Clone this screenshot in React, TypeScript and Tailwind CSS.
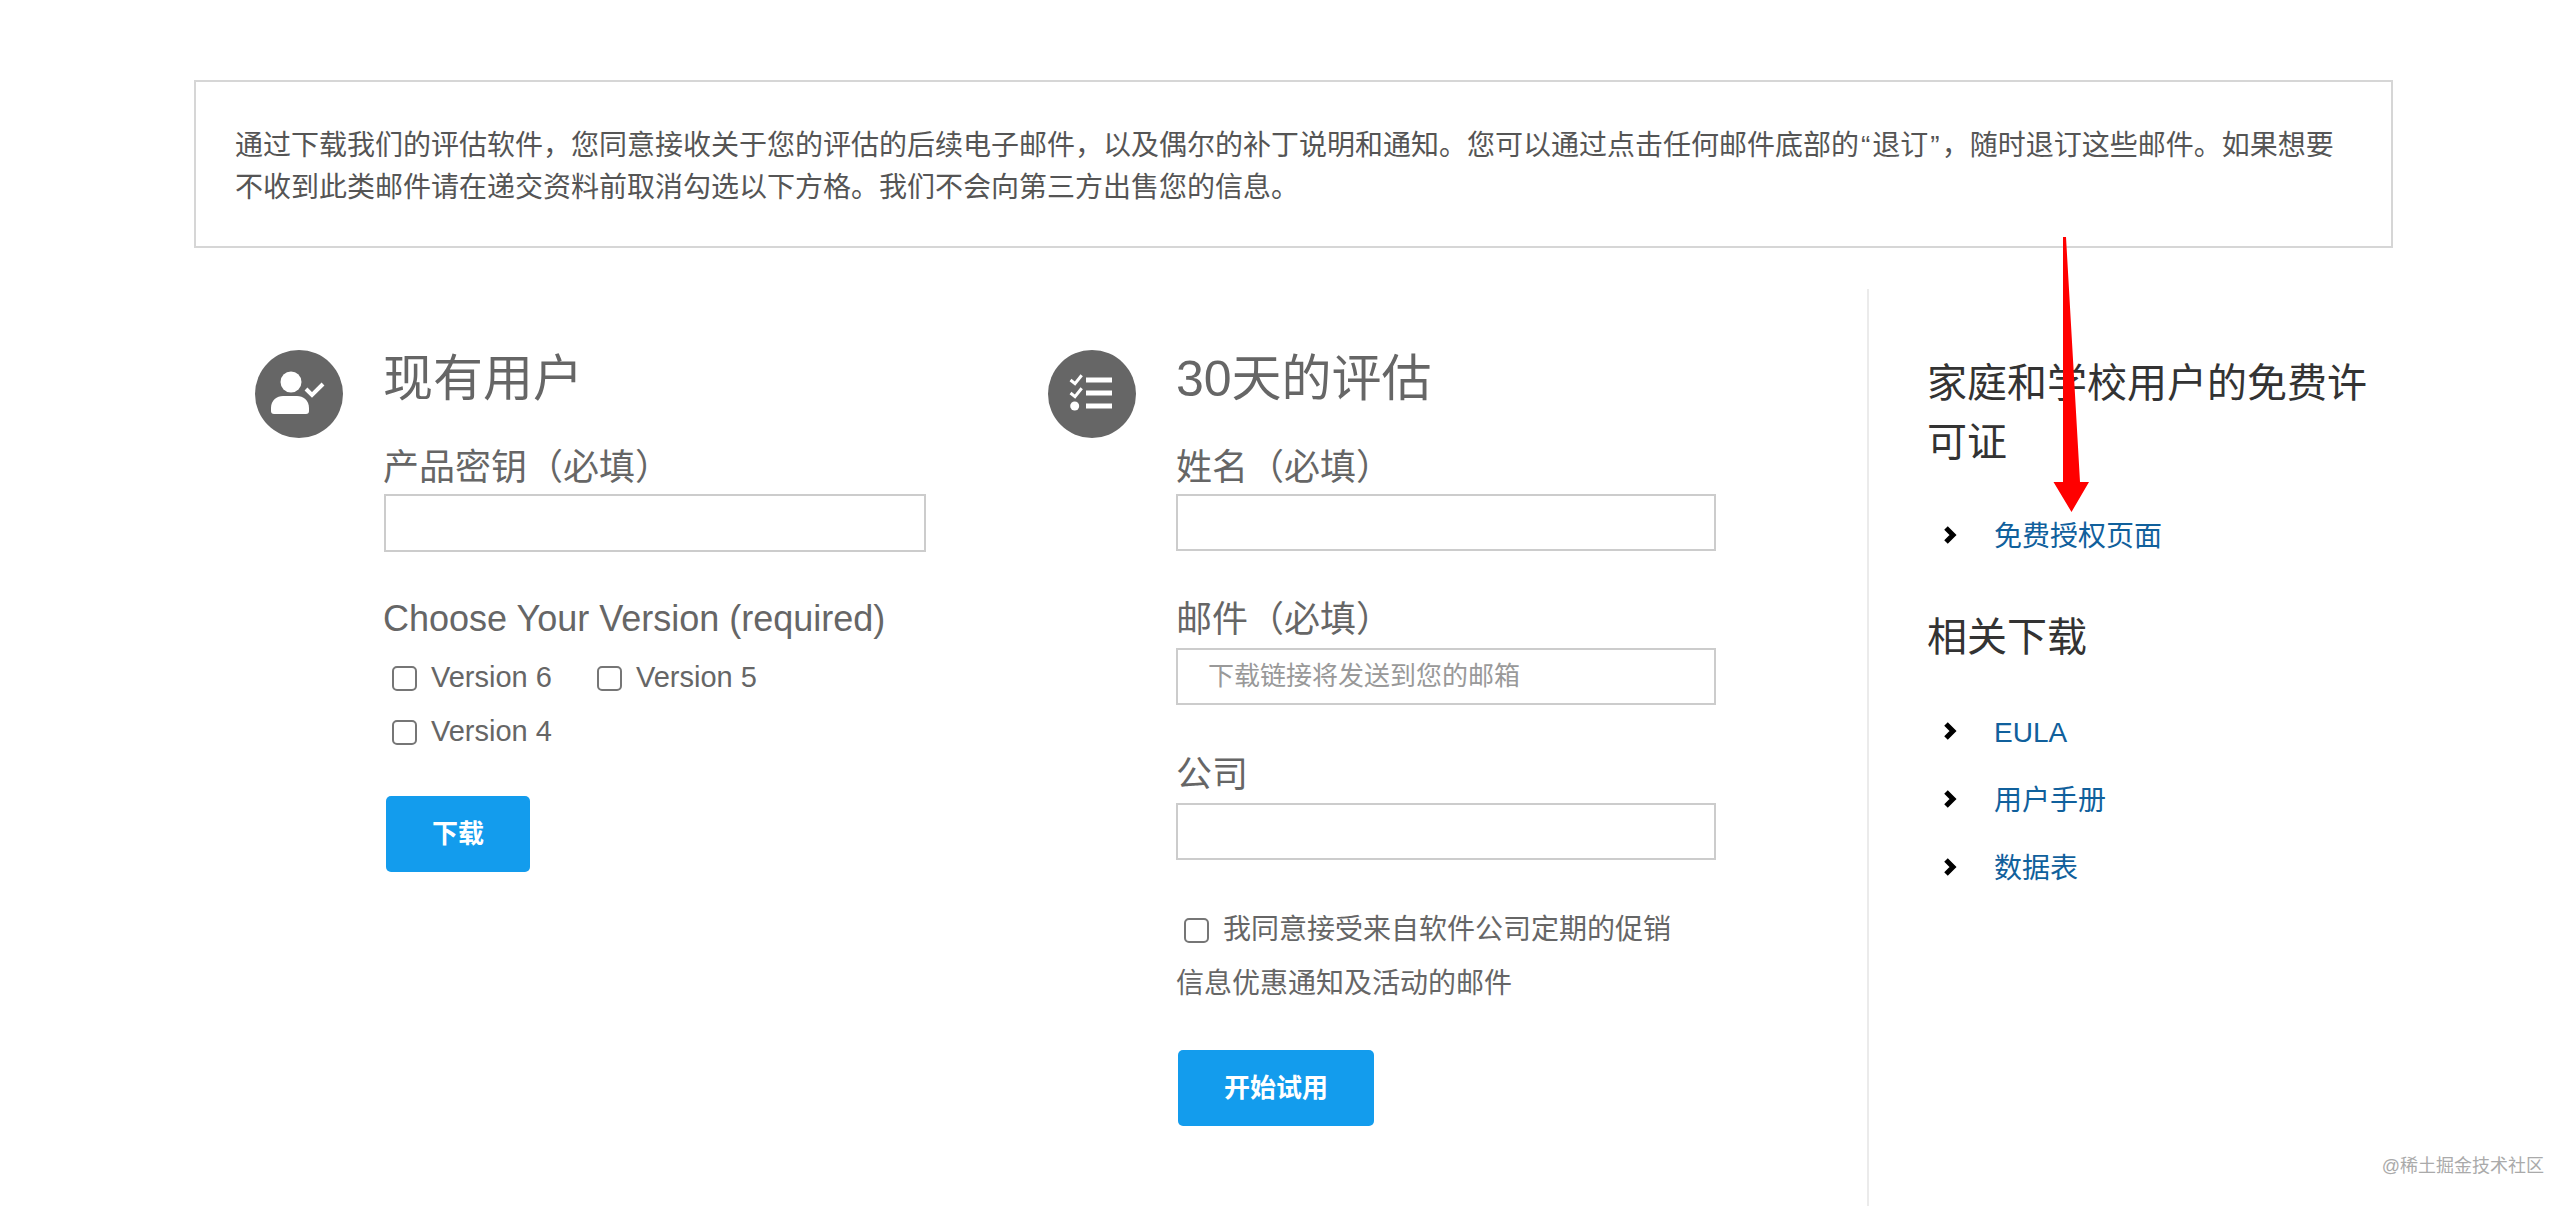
const cjk = "font-['Liberation_Sans','Noto_Sans_CJK_SC',sans-serif]";

const Chevron = () => (
  <svg className="w-[14px] h-[18px] shrink-0 -mt-[4px]" viewBox="0 0 14 18" fill="none" stroke="#000" strokeWidth={5}>
    <path d="M3 2l7 7-7 7" />
  </svg>
);

const Check = () => (
  <input
    type="checkbox"
    className="appearance-none w-[25px] h-[25px] shrink-0 rounded-[5px] border-2 border-[#767676] bg-white"
  />
);

const Field = ({ label, placeholder, top, gap }: { label: string; placeholder?: string; top: string; gap: string }) => (
  <div className={top}>
    <label className={`block text-[36px] leading-[50px] text-[#666] ${gap}`}>{label}</label>
    <input
      placeholder={placeholder}
      className="block w-[540px] h-[57px] border-2 border-[#ccc] bg-white pl-[30px] text-[26px] text-[#666] placeholder:text-[#999] outline-none"
    />
  </div>
);

const LinkRow = ({ text }: { text: string }) => (
  <a href="#" className="flex items-center h-[68px] pl-[16px] text-[28px] text-[#10609c]">
    <Chevron />
    <span className="ml-[37px]">{text}</span>
  </a>
);

const Version = ({ name, wide }: { name: string; wide?: boolean }) => (
  <label className={`flex items-center gap-[14px] text-[29px] text-[#666] ${wide ? "w-[205px]" : ""}`}>
    <Check />
    {name}
  </label>
);

export default function App() {
  return (
    <div className={`relative w-[2574px] h-[1206px] overflow-hidden bg-white pt-[80px] ${cjk}`}>
      <div className="ml-[194px] w-[2199px] h-[168px] border-2 border-[#d6d6d6] flex items-center pl-[39px] pt-[5px]">
        <p className="text-[28px] leading-[42px] text-[#555] whitespace-nowrap">
          通过下载我们的评估软件，您同意接收关于您的评估的后续电子邮件，以及偶尔的补丁说明和通知。您可以通过点击任何邮件底部的<span className="px-[2px]">“</span>退订<span className="px-[2px]">”</span>，随时退订这些邮件。如果想要
          <br />
          不收到此类邮件请在递交资料前取消勾选以下方格。我们不会向第三方出售您的信息。
        </p>
      </div>

      <div className="flex mt-[41px] h-[917px]">
        <div className="ml-[255px] w-[793px] pt-[60px] flex gap-[40px]">
          <div className="w-[88px] h-[88px] mt-[1px] rounded-full bg-[#666] shrink-0">
            <svg viewBox="0 0 88 88" className="w-[88px] h-[88px]" fill="#fff">
              <circle cx="36" cy="32" r="10.5" />
              <path d="M16 58c0-8 6-12 12-12h14c6 0 12 4 12 12v3a3 3 0 01-3 3H19a3 3 0 01-3-3z" />
              <path d="M51 39l6 6 11-11" fill="none" stroke="#fff" strokeWidth={4} />
            </svg>
          </div>
          <div>
            <h2 className="text-[50px] leading-[60px] text-[#666] font-normal mb-[34px]">现有用户</h2>
            <label className="block text-[36px] leading-[50px] text-[#666] mb-[1px]">产品密钥（必填）</label>
            <input className="block ml-[1px] w-[542px] h-[58px] border-2 border-[#ccc] bg-white outline-none" />
            <div className="mt-[42px] text-[36px] leading-[50px] text-[#666]">Choose Your Version (required)</div>
            <div className="mt-[7px] pl-[9px]">
              <div className="flex items-center h-[54px]">
                <Version name="Version 6" wide />
                <Version name="Version 5" />
              </div>
              <div className="flex items-center h-[54px]">
                <Version name="Version 4" />
              </div>
            </div>
            <button className="block mt-[37px] ml-[3px] w-[144px] h-[76px] rounded-[5px] bg-[#139ced] text-white text-[26px] font-bold">
              下载
            </button>
          </div>
        </div>

        <div className="w-[819px] pt-[60px] flex gap-[40px]">
          <div className="w-[88px] h-[88px] mt-[1px] rounded-full bg-[#666] shrink-0">
            <svg viewBox="0 0 88 88" className="w-[88px] h-[88px]" fill="#fff">
              <rect x="38" y="27.5" width="26" height="5" />
              <rect x="38" y="40.5" width="26" height="5" />
              <rect x="38" y="53.5" width="26" height="5" />
              <path d="M22.5 30l4.5 3.7 6.7-8.4M22.5 43l4.5 3.7 6.7-8.4" fill="none" stroke="#fff" strokeWidth={3} />
              <circle cx="26.7" cy="56" r="4.5" />
            </svg>
          </div>
          <div>
            <h2 className="text-[50px] leading-[60px] text-[#666] font-normal mb-[34px]">30天的评估</h2>
            <Field label="姓名（必填）" top="" gap="mb-[1px]" />
            <Field label="邮件（必填）" placeholder="下载链接将发送到您的邮箱" top="mt-[44px]" gap="mb-[3px]" />
            <Field label="公司" top="mt-[45px]" gap="mb-[3px]" />
            <div className="mt-[43px] text-[28px] leading-[54px] text-[#666]">
              <label className="flex items-center gap-[14px] pl-[8px]">
                <Check />
                我同意接受来自软件公司定期的促销
              </label>
              <div>信息优惠通知及活动的邮件</div>
            </div>
            <button className="block mt-[39px] ml-[2px] w-[196px] h-[76px] rounded-[5px] bg-[#139ced] text-white text-[26px] font-bold">
              开始试用
            </button>
          </div>
        </div>

        <div className="border-l-2 border-[#ebebeb] pl-[58px] pt-[65px] flex-1">
          <h3 className="w-[450px] text-[40px] leading-[59px] text-[#333] font-normal">家庭和学校用户的免费许可证</h3>
          <div className="mt-[31px]">
            <LinkRow text="免费授权页面" />
          </div>
          <h3 className="mt-[37px] text-[40px] leading-[59px] text-[#333] font-normal">相关下载</h3>
          <div className="mt-[32px]">
            <LinkRow text="EULA" />
            <LinkRow text="用户手册" />
            <LinkRow text="数据表" />
          </div>
        </div>
      </div>

      <svg className="absolute left-0 top-0 pointer-events-none" width="2574" height="1206">
        <polygon fill="#ff0000" points="2063,237 2066,237 2080,482 2089,482 2071.5,512 2053.5,482 2063,482" />
      </svg>
      <div className="absolute right-[30px] top-[1153px] text-[18px] leading-[26px] text-[#aaa]">@稀土掘金技术社区</div>
    </div>
  );
}
